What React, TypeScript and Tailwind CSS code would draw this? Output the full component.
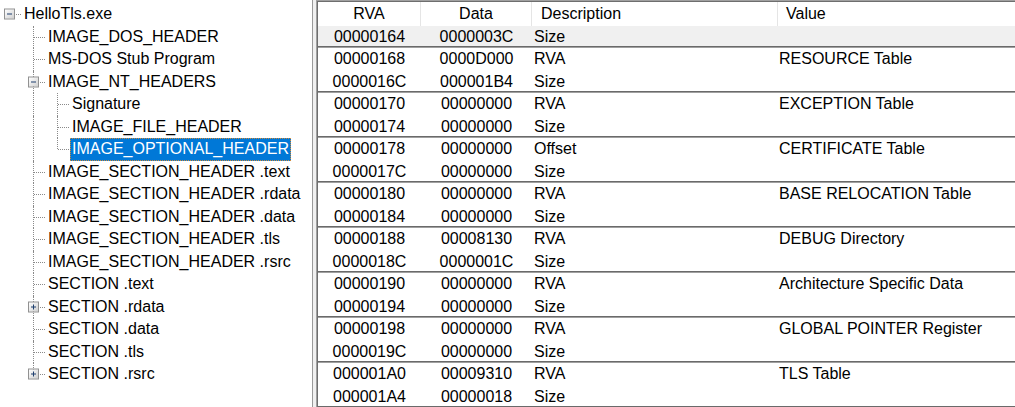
import React from "react";

type Node = {
  label: string;
  depth: number;
  last: boolean;
  cont: boolean[];
  exp: "minus" | "plus" | null;
  selected?: boolean;
};

const treeNodes: Node[] = [
  { label: "HelloTls.exe", depth: 0, last: true, cont: [], exp: "minus" },
  { label: "IMAGE_DOS_HEADER", depth: 1, last: false, cont: [false], exp: null },
  { label: "MS-DOS Stub Program", depth: 1, last: false, cont: [false], exp: null },
  { label: "IMAGE_NT_HEADERS", depth: 1, last: false, cont: [false], exp: "minus" },
  { label: "Signature", depth: 2, last: false, cont: [false, true], exp: null },
  { label: "IMAGE_FILE_HEADER", depth: 2, last: false, cont: [false, true], exp: null },
  { label: "IMAGE_OPTIONAL_HEADER", depth: 2, last: true, cont: [false, true], exp: null, selected: true },
  { label: "IMAGE_SECTION_HEADER .text", depth: 1, last: false, cont: [false], exp: null },
  { label: "IMAGE_SECTION_HEADER .rdata", depth: 1, last: false, cont: [false], exp: null },
  { label: "IMAGE_SECTION_HEADER .data", depth: 1, last: false, cont: [false], exp: null },
  { label: "IMAGE_SECTION_HEADER .tls", depth: 1, last: false, cont: [false], exp: null },
  { label: "IMAGE_SECTION_HEADER .rsrc", depth: 1, last: false, cont: [false], exp: null },
  { label: "SECTION .text", depth: 1, last: false, cont: [false], exp: null },
  { label: "SECTION .rdata", depth: 1, last: false, cont: [false], exp: "plus" },
  { label: "SECTION .data", depth: 1, last: false, cont: [false], exp: null },
  { label: "SECTION .tls", depth: 1, last: false, cont: [false], exp: null },
  { label: "SECTION .rsrc", depth: 1, last: true, cont: [false], exp: "plus" },
];

type Row = { rva: string; data: string; desc: string; value: string; sep: boolean; hot?: boolean };

const rows: Row[] = [
  { rva: "00000164", data: "0000003C", desc: "Size", value: "", sep: true, hot: true },
  { rva: "00000168", data: "0000D000", desc: "RVA", value: "RESOURCE Table", sep: false },
  { rva: "0000016C", data: "000001B4", desc: "Size", value: "", sep: true },
  { rva: "00000170", data: "00000000", desc: "RVA", value: "EXCEPTION Table", sep: false },
  { rva: "00000174", data: "00000000", desc: "Size", value: "", sep: true },
  { rva: "00000178", data: "00000000", desc: "Offset", value: "CERTIFICATE Table", sep: false },
  { rva: "0000017C", data: "00000000", desc: "Size", value: "", sep: true },
  { rva: "00000180", data: "00000000", desc: "RVA", value: "BASE RELOCATION Table", sep: false },
  { rva: "00000184", data: "00000000", desc: "Size", value: "", sep: true },
  { rva: "00000188", data: "00008130", desc: "RVA", value: "DEBUG Directory", sep: false },
  { rva: "0000018C", data: "0000001C", desc: "Size", value: "", sep: true },
  { rva: "00000190", data: "00000000", desc: "RVA", value: "Architecture Specific Data", sep: false },
  { rva: "00000194", data: "00000000", desc: "Size", value: "", sep: true },
  { rva: "00000198", data: "00000000", desc: "RVA", value: "GLOBAL POINTER Register", sep: false },
  { rva: "0000019C", data: "00000000", desc: "Size", value: "", sep: true },
  { rva: "000001A0", data: "00009310", desc: "RVA", value: "TLS Table", sep: false },
  { rva: "000001A4", data: "00000018", desc: "Size", value: "", sep: true },
];

function Expander({ kind }: { kind: "minus" | "plus" }) {
  return (
    <div className="absolute left-[4px] top-1/2 -translate-y-1/2 w-[11px] h-[11px] border border-[#919191] bg-gradient-to-br from-white to-[#d0d0d0] flex items-center justify-center">
      <div className="relative w-[5px] h-[5px] flex items-center justify-center">
        <div className="w-[5px] h-[1px] bg-[#1e3f6e]" />
        {kind === "plus" && (
          <div className="absolute left-[2px] top-0 w-[1px] h-[5px] bg-[#1e3f6e]" />
        )}
      </div>
    </div>
  );
}

function TreeRow({ n }: { n: Node }) {
  return (
    <div className="flex h-[22.5px] items-stretch">
      {n.cont.map((c, i) => (
        <div key={i} className="relative w-[24px] shrink-0">
          {c && <div className="absolute left-[9px] top-0 bottom-0 border-l border-dotted border-[#8a8a8a]" />}
        </div>
      ))}
      <div className="relative w-[22px] shrink-0">
        {n.depth > 0 && (
          <div
            className={
              n.last
                ? "absolute left-[9px] top-0 h-1/2 border-l border-dotted border-[#8a8a8a]"
                : "absolute left-[9px] top-0 bottom-0 border-l border-dotted border-[#8a8a8a]"
            }
          />
        )}
        <div className="absolute left-[10px] w-[11px] top-1/2 border-t border-dotted border-[#8a8a8a]" />
        {n.exp && <Expander kind={n.exp} />}
      </div>
      <div
        className={
          n.selected
            ? "flex items-center px-[2px] bg-[#0078d7] text-white outline-1 outline-dotted outline-[#d08a3a] -outline-offset-1 whitespace-nowrap"
            : "flex items-center px-[2px] text-black whitespace-nowrap"
        }
      >
        {n.label}
      </div>
    </div>
  );
}

export default function App() {
  return (
    <div className="w-[1015px] h-[407px] overflow-hidden flex bg-[#f0f0f0] font-['Liberation_Sans',Arial,sans-serif] text-[16px] text-black leading-none">
      <div className="w-[313px] shrink-0 bg-white border-r border-[#9a9a9a] pt-[3px]">
        {treeNodes.map((n, i) => (
          <TreeRow key={i} n={n} />
        ))}
      </div>
      <div className="w-[3px] shrink-0" />
      <div className="flex-1 min-w-0 border-l border-t border-[#a0a0a0]">
        <div className="h-full border-l border-t border-[#6e6e6e] bg-white flex flex-col">
          <div className="flex h-[23.5px] shrink-0 bg-white">
            <div className="w-[103px] shrink-0 flex items-center justify-center border-r border-[#e5e5e5]">RVA</div>
            <div className="w-[111px] shrink-0 flex items-center justify-center border-r border-[#e5e5e5]">Data</div>
            <div className="w-[246px] shrink-0 flex items-center pl-[9px] border-r border-[#e5e5e5]">Description</div>
            <div className="flex-1 flex items-center pl-[8px]">Value</div>
          </div>
          {rows.map((r, i) => (
            <div
              key={i}
              className={
                (r.hot ? "bg-[#f0f0f0] " : "bg-white ") +
                (r.sep
                  ? "shadow-[inset_0_-1px_0_#a0a0a0,inset_0_-2px_0_#6a6a6a] "
                  : "") +
                "flex h-[22.5px] shrink-0 whitespace-nowrap"
              }
            >
              <div className="w-[103px] shrink-0 flex items-center justify-center">{r.rva}</div>
              <div className="w-[111px] shrink-0 flex items-center justify-center">{r.data}</div>
              <div className="w-[246px] shrink-0 flex items-center pl-[2px]">{r.desc}</div>
              <div className="flex-1 flex items-center pl-[1px]">{r.value}</div>
            </div>
          ))}
        </div>
      </div>
    </div>
  );
}
